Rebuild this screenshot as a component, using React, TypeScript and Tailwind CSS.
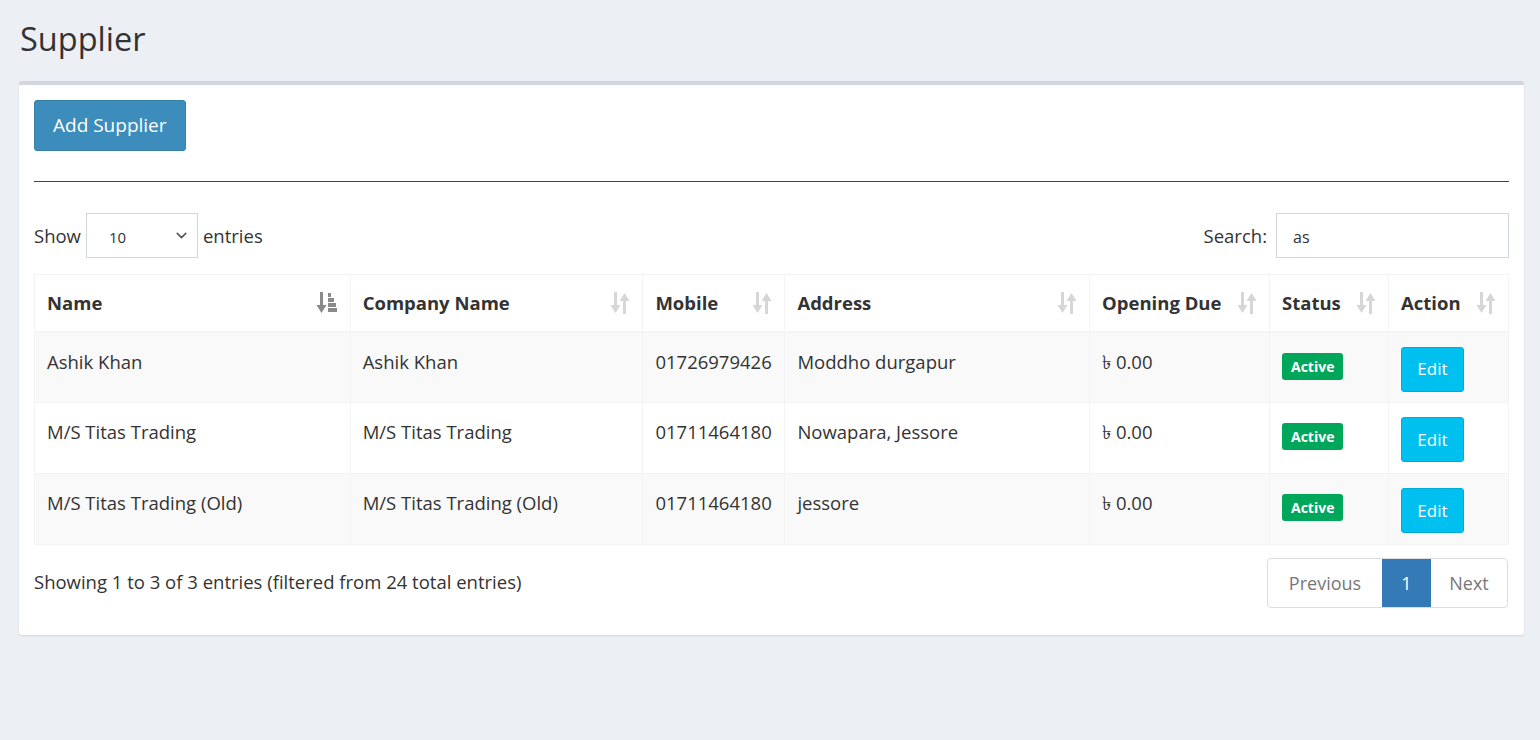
import { ChevronDown } from "lucide-react";

const rows = [
  { name: "Ashik Khan", company: "Ashik Khan", mobile: "01726979426", address: "Moddho durgapur" },
  { name: "M/S Titas Trading", company: "M/S Titas Trading", mobile: "01711464180", address: "Nowapara, Jessore" },
  { name: "M/S Titas Trading (Old)", company: "M/S Titas Trading (Old)", mobile: "01711464180", address: "jessore" },
];

const cols = [
  { label: "Name", w: "w-[316px]", active: true },
  { label: "Company Name", w: "w-[293px]" },
  { label: "Mobile", w: "w-[142px]" },
  { label: "Address", w: "w-[305px]" },
  { label: "Opening Due", w: "w-[180px]" },
  { label: "Status", w: "w-[119px]" },
  { label: "Action", w: "w-[120px]" },
];

const SortIcon = ({ active }: { active?: boolean }) => {
  if (active) {
    return (
      <svg width="22" height="24" viewBox="0 0 22 24" className="text-[#8a8a8a] shrink-0">
        <rect x="4" y="1" width="3" height="15" fill="currentColor" />
        <path d="M0.5 14 L5.5 22 L10.5 14 Z" fill="currentColor" />
        <rect x="12" y="2" width="3" height="4" fill="currentColor" />
        <rect x="12" y="7" width="6" height="4" fill="currentColor" />
        <rect x="12" y="12" width="8" height="4" fill="currentColor" />
        <rect x="12" y="17" width="9" height="4" fill="currentColor" />
      </svg>
    );
  }
  return (
    <svg width="20" height="24" viewBox="0 0 20 24" className="text-[#d6d6d6] shrink-0">
      <rect x="4" y="1" width="3" height="15" fill="currentColor" />
      <path d="M0.5 14 L5.5 22 L10.5 14 Z" fill="currentColor" />
      <rect x="13" y="8" width="3" height="15" fill="currentColor" />
      <path d="M9.5 10 L14.5 2 L19.5 10 Z" fill="currentColor" />
    </svg>
  );
};

export default function App() {
  return (
    <div
      className="min-h-[740px] bg-[#ecf0f5] text-[#333] pt-[18px] pl-[19px] pr-[16px]"
      style={{ fontFamily: "'Source Sans Pro', 'Open Sans', 'Noto Sans', sans-serif" }}
    >
      <h1 className="text-[32.5px] leading-[42px] ml-[1px] mb-[21px] font-normal">Supplier</h1>

      <div className="bg-white border-t-4 border-[#d2d6de] rounded-[3px] shadow-[0_1px_2px_rgba(0,0,0,0.12)] px-[15px] pt-[15px] pb-[27px]">
        <button className="h-[51px] px-[18px] bg-[#3c8dbc] border border-[#367fa9] rounded-[3px] text-white text-[19px]">
          Add Supplier
        </button>

        <div className="mt-[30px] border-t border-[#444]" />

        <div className="flex items-center justify-between mt-[31px] text-[18.5px]">
          <div className="flex items-center">
            <span>Show</span>
            <div className="mx-[5px] w-[112px] h-[45px] border border-[#d2d6de] flex items-center justify-between pl-[22px] pr-[7px]">
              <span className="text-[15px] mt-[3px]">10</span>
              <ChevronDown size={17} strokeWidth={2.2} className="text-[#555]" />
            </div>
            <span>entries</span>
          </div>
          <div className="flex items-center">
            <span className="mr-[9px]">Search:</span>
            <div className="w-[233px] h-[45px] border border-[#d2d6de] flex items-center pl-[16px] text-[16px]">
              <span className="mt-[2px]">as</span>
            </div>
          </div>
        </div>

        <table className="mt-[16px] w-full border-collapse border border-[#f4f4f4] text-[18.5px]">
          <thead>
            <tr className="h-[57px] border-b-2 border-[#f4f4f4]">
              {cols.map((c) => (
                <th key={c.label} className={`${c.w} border-x border-[#f4f4f4] px-[12px] text-left font-bold text-[18.5px] p-0`}>
                  <div className="flex items-center justify-between">
                    <span>{c.label}</span>
                    <SortIcon active={c.active} />
                  </div>
                </th>
              ))}
            </tr>
          </thead>
          <tbody>
            {rows.map((r, i) => (
              <tr key={i} className={`h-[71px] border-t border-[#f4f4f4] ${i % 2 === 0 ? "bg-[#f9f9f9]" : "bg-white"}`}>
                <td className="border-x border-[#f4f4f4] px-[12px] align-top pt-[15px]">{r.name}</td>
                <td className="border-x border-[#f4f4f4] px-[12px] align-top pt-[15px]">{r.company}</td>
                <td className="border-x border-[#f4f4f4] px-[12px] align-top pt-[15px]">{r.mobile}</td>
                <td className="border-x border-[#f4f4f4] px-[12px] align-top pt-[15px]">{r.address}</td>
                <td className="border-x border-[#f4f4f4] px-[12px] align-top pt-[15px]">৳ 0.00</td>
                <td className="border-x border-[#f4f4f4] px-[12px] align-top pt-[18px]">
                  <span className="inline-block bg-[#00a65a] text-white text-[14px] font-bold rounded-[3px] px-[9px] leading-[27px]">
                    Active
                  </span>
                </td>
                <td className="border-x border-[#f4f4f4] px-[12px] align-top pt-[14px]">
                  <button className="w-[63px] h-[45px] bg-[#00c0ef] border border-[#00acd6] rounded-[3px] text-white text-[17px]">
                    Edit
                  </button>
                </td>
              </tr>
            ))}
          </tbody>
        </table>

        <div className="flex items-start justify-between mt-[13px] text-[18.5px]">
          <span className="mt-[10px]">Showing 1 to 3 of 3 entries (filtered from 24 total entries)</span>
          <div className="flex h-[50px] border border-[#ddd] rounded-[4px] overflow-hidden text-[#777] text-[18px] mr-[1px]">
            <span className="w-[114px] flex items-center justify-center">Previous</span>
            <span className="w-[49px] flex items-center justify-center bg-[#337ab7] text-white">1</span>
            <span className="w-[76px] flex items-center justify-center">Next</span>
          </div>
        </div>
      </div>
    </div>
  );
}
